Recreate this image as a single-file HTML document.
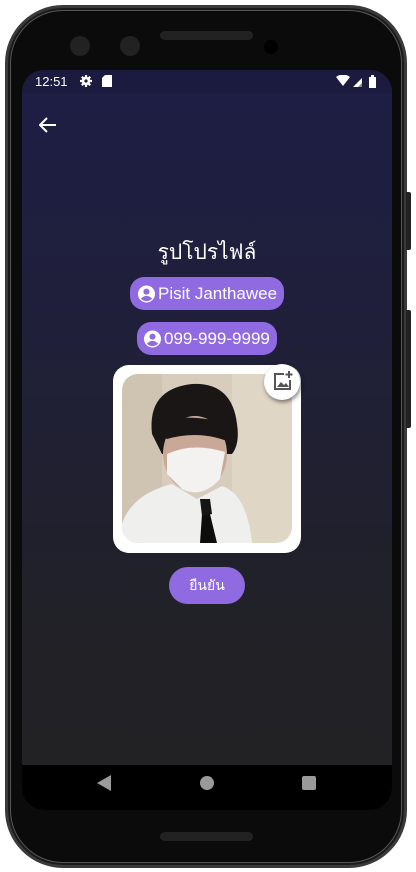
<!DOCTYPE html>
<html><head><meta charset="utf-8"><style>
*{margin:0;padding:0;box-sizing:border-box}
body{width:416px;height:872px;background:#fff;position:relative;overflow:hidden;font-family:"Liberation Sans","Noto Sans CJK SC",sans-serif}
.phone{position:absolute;left:5px;top:5px;width:402px;height:863px;background:#0b0b0b;border-radius:58px;border:3px solid #3a3a3a;box-shadow:0 0 0 2px #1a1a1a inset,0 0 0 3px #555 inset}
.btn1{position:absolute;left:406px;top:192px;width:5px;height:58px;background:#222;border-radius:0 2px 2px 0}
.btn2{position:absolute;left:406px;top:310px;width:5px;height:118px;background:#222;border-radius:0 2px 2px 0}
.screen{position:absolute;left:22px;top:70px;width:370px;height:740px;border-radius:22px;overflow:hidden;background:linear-gradient(#1e1e45 0%,#1f1f3c 30%,#212127 75%,#222224 100%)}
.status{position:absolute;left:0;top:0;width:370px;height:23px;background:#1b1b40;color:#fff;font-size:13px}
.nav{position:absolute;left:0;top:695px;width:370px;height:45px;background:#000}
.speaker{position:absolute;left:160px;top:31px;width:93px;height:9px;border-radius:5px;background:#222;}
.speaker2{position:absolute;left:160px;top:832px;width:93px;height:9px;border-radius:5px;background:#222;}
.cam{position:absolute;width:20px;height:20px;border-radius:50%;background:#222;top:36px}
.pill{position:absolute;background:#8f6ae0;color:#fff;border-radius:14px;height:33px;display:flex;align-items:center;font-size:17px;white-space:nowrap;font-family:"Liberation Sans",sans-serif}
</style></head><body>
<div class="phone"></div>
<div class="btn1"></div><div class="btn2"></div>
<div class="speaker"></div><div class="speaker2"></div>
<div class="cam" style="left:70px"></div><div class="cam" style="left:120px"></div>
<div class="cam" style="left:264px;top:40px;width:14px;height:14px;background:#000"></div>
<div class="screen">
 <div class="status">
  <span style="position:absolute;left:13px;top:4px">12:51</span>
  <svg style="position:absolute;left:58px;top:5px" width="12" height="12" viewBox="0 0 12 12"><circle cx="6" cy="6" r="4.2" fill="#fff"/><path d="M6 0V12M0 6H12M1.8 1.8L10.2 10.2M10.2 1.8L1.8 10.2" stroke="#fff" stroke-width="2.2"/><circle cx="6" cy="6" r="1.6" fill="#1b1b40"/></svg>
  <svg style="position:absolute;left:80px;top:5px" width="10" height="12"><path d="M3 0H10V12H0V3Z" fill="#fff"/></svg>
  <svg style="position:absolute;left:314px;top:5px" width="44" height="13"><path d="M0 2Q7-3 14 2L7 11Z" fill="#fff"/><path d="M17 12L26 3V12Z" fill="#fff"/><path d="M22 12L26 8V12Z" fill="#888"/><rect x="33" y="2" width="7" height="11" fill="#fff"/><rect x="35" y="0" width="3" height="2" fill="#fff"/></svg>
 </div>
 <svg style="position:absolute;left:17px;top:47px" width="18" height="16" viewBox="0 0 18 16"><path d="M17 8H2M8 1L1 8L8 15" stroke="#fff" stroke-width="2" fill="none"/></svg>
 <div style="position:absolute;left:0;width:370px;top:166px;text-align:center;color:#fff;font-size:21px;font-family:'Liberation Sans','Noto Sans CJK SC','WenQuanYi Zen Hei',sans-serif">รูปโปรไฟล์</div>
 <div class="pill" style="left:108px;top:207px;width:154px;padding-left:7px">
  <svg width="19" height="20" viewBox="0 0 20 20"><circle cx="10" cy="10" r="9" fill="#fff"/><circle cx="10" cy="7.5" r="3.2" fill="#8f6ae0"/><path d="M4 15Q10 9 16 15Q10 20 4 15Z" fill="#8f6ae0"/></svg><span style="margin-left:2px">Pisit Janthawee</span></div>
 <div class="pill" style="left:115px;top:252px;width:140px;padding-left:6px">
  <svg width="19" height="20" viewBox="0 0 20 20"><circle cx="10" cy="10" r="9" fill="#fff"/><circle cx="10" cy="7.5" r="3.2" fill="#8f6ae0"/><path d="M4 15Q10 9 16 15Q10 20 4 15Z" fill="#8f6ae0"/></svg><span style="margin-left:2px">099-999-9999</span></div>
 <div style="position:absolute;left:91px;top:295px;width:188px;height:188px;background:#fff;border-radius:16px">
  <svg style="position:absolute;left:9px;top:9px;border-radius:16px" width="170" height="169" viewBox="0 0 170 169">
   <defs><clipPath id="c"><rect width="170" height="169" rx="16"/></clipPath></defs>
   <g clip-path="url(#c)">
   <rect width="170" height="169" fill="#d8cdbd"/>
   <rect x="110" width="60" height="169" fill="#e0d6c6"/>
   <rect width="40" height="169" fill="#cfc4b2"/>
   <path d="M30 60Q25 15 70 10Q110 8 115 50Q118 70 110 80L40 80Z" fill="#1a1616"/>
   <ellipse cx="73" cy="80" rx="32" ry="38" fill="#c9a898"/>
   <path d="M30 55Q50 35 110 50L112 70Q80 55 45 65Z" fill="#1a1616"/>
   <path d="M45 80Q70 68 103 78L98 105Q80 125 60 115L45 100Z" fill="#f3f2f0"/>
   <path d="M0 150Q10 120 50 110L75 125L100 112Q125 120 130 169H0Z" fill="#efefee"/>
   <path d="M80 140L88 140L95 169H78Z" fill="#0d0d0d"/>
   <path d="M78 125L88 125L90 140L80 142Z" fill="#151515"/>
   </g>
  </svg>
  <div style="position:absolute;left:151px;top:-1px;width:36px;height:36px;border-radius:50%;background:#fff;box-shadow:1px 2px 4px rgba(0,0,0,.5)">
   <svg style="position:absolute;left:8px;top:6px" width="22" height="22" viewBox="0 0 22 22"><path d="M12 4H3V19H18V10" fill="none" stroke="#555" stroke-width="2"/><path d="M5 17L9 12L12 15L14 13L17 17Z" fill="#555"/><path d="M17 1V8M13.5 4.5H20.5" stroke="#555" stroke-width="2"/></svg>
  </div>
 </div>
 <div style="position:absolute;left:147px;top:497px;width:76px;height:37px;border-radius:19px;background:#8f6ae0;color:#fff;font-size:14px;display:flex;align-items:center;justify-content:center;font-family:'Liberation Sans','Noto Sans CJK SC','WenQuanYi Zen Hei',sans-serif">ยืนยัน</div>
 <div class="nav">
  <svg style="position:absolute;left:75px;top:10px" width="14" height="16"><path d="M14 0V16L0 8Z" fill="#9a9a9a"/></svg>
  <div style="position:absolute;left:178px;top:11px;width:14px;height:14px;border-radius:50%;background:#9a9a9a"></div>
  <div style="position:absolute;left:280px;top:11px;width:14px;height:14px;border-radius:2px;background:#9a9a9a"></div>
 </div>
</div>
</body></html>
